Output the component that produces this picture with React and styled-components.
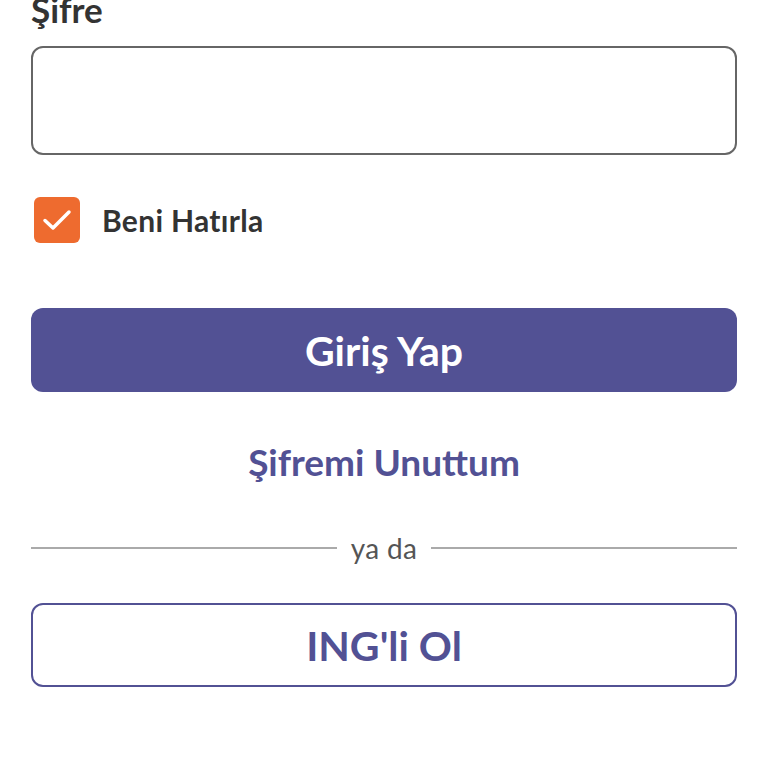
import React from "react";
import styled, { createGlobalStyle } from "styled-components";

const Global = createGlobalStyle`
  html, body { margin: 0; padding: 0; background: #fff; }
  body { font-family: Lato, "Noto Sans", sans-serif; -webkit-font-smoothing: antialiased; }
  * { box-sizing: border-box; }
`;

const PURPLE = "#525194";

const Page = styled.div`
  display: flex;
  flex-direction: column;
  padding: 0 31px;
  margin-top: -13px;
`;

const Label = styled.label`
  font-size: 35px;
  font-weight: 700;
  color: #333;
  line-height: 40px;
  height: 40px;
  padding-top: 2px;
`;

const Input = styled.div`
  margin-top: 19px;
  height: 109px;
  border: 2.5px solid #666;
  border-radius: 12px;
`;

const CheckRow = styled.div`
  display: flex;
  align-items: center;
  gap: 22px;
  margin-top: 42px;
  padding-left: 3px;
`;

const Box = styled.span`
  width: 46px;
  height: 46px;
  border-radius: 6px;
  background: #ee6b2f;
  display: flex;
  align-items: center;
  justify-content: center;
`;

const CheckText = styled.span`
  font-size: 30px;
  font-weight: 700;
  color: #333;
  letter-spacing: 0.3px;
`;

const Primary = styled.button`
  margin-top: 65px;
  height: 84px;
  border: none;
  border-radius: 12px;
  background: ${PURPLE};
  color: #fff;
  font-family: inherit;
  font-size: 41px;
  font-weight: 700;
`;

const Link = styled.a`
  margin-top: 48px;
  align-self: center;
  color: ${PURPLE};
  font-size: 37px;
  font-weight: 700;
  line-height: 44px;
`;

const Divider = styled.div`
  margin-top: 49px;
  display: flex;
  align-items: center;
  gap: 14px;
  &::before, &::after {
    content: "";
    flex: 1;
    height: 1.5px;
    background: #aaa;
  }
`;

const DividerText = styled.span`
  font-size: 28px;
  color: #555;
  line-height: 30px;
  letter-spacing: 0.3px;
`;

const Secondary = styled.button`
  margin-top: 40px;
  height: 84px;
  border: 2px solid ${PURPLE};
  border-radius: 12px;
  background: #fff;
  color: ${PURPLE};
  font-family: inherit;
  font-size: 41px;
  font-weight: 700;
`;

export default function App() {
  return (
    <>
      <Global />
      <Page>
        <Label>Şifre</Label>
        <Input />
        <CheckRow>
          <Box>
            <svg width="30" height="22" viewBox="0 0 30 22" fill="none">
              <path d="M3 11.5 L11 19 L27 3" stroke="#fff" strokeWidth="3.5" strokeLinecap="round" strokeLinejoin="round" />
            </svg>
          </Box>
          <CheckText>Beni Hatırla</CheckText>
        </CheckRow>
        <Primary>Giriş Yap</Primary>
        <Link>Şifremi Unuttum</Link>
        <Divider>
          <DividerText>ya da</DividerText>
        </Divider>
        <Secondary>ING'li Ol</Secondary>
      </Page>
    </>
  );
}
